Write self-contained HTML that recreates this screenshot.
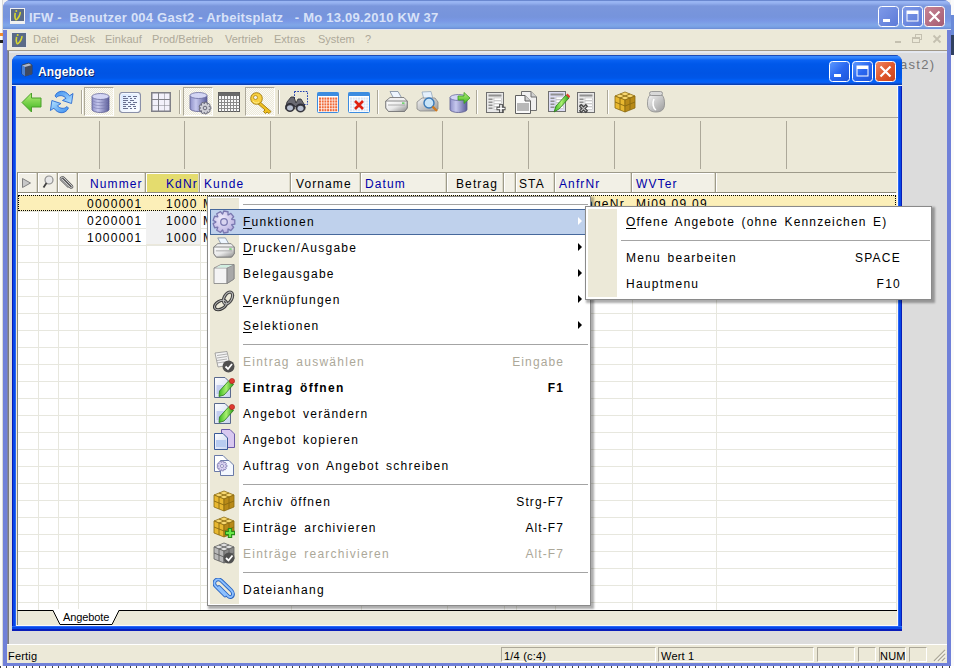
<!DOCTYPE html><html><head><meta charset="utf-8"><style>
*{box-sizing:border-box;margin:0;padding:0}
html,body{width:954px;height:668px;overflow:hidden;background:#f2f2f2;font-family:"Liberation Sans",sans-serif;position:relative}
.a{position:absolute}
.t{position:absolute;white-space:pre;font:12px "Liberation Sans",sans-serif;letter-spacing:1.25px;word-spacing:2px;color:#000}
#ow{left:3px;top:0;width:948px;height:666px;background:#7080d8;border-radius:8px 8px 0 0;}
#otb{left:3px;top:0;width:948px;height:30px;border-radius:8px 8px 0 0;
 background:linear-gradient(#6a88d0 0px,#6a88d0 1px,#9ab6f4 1px,#96b2f0 3px,#7a96dc 6px,#7694dc 17px,#7a98e6 21px,#80a6e8 25px,#78a0e4 27px,#6c8cd4 29px,#e4e6f0 29px,#e4e6f0 30px);}
#ottl{left:29px;top:10px;font:bold 13px "Liberation Sans",sans-serif;color:#d8e2f8;letter-spacing:0.23px;white-space:pre}
#omenu{left:7px;top:30px;width:940px;height:20px;background:#ece9d8;}
#omenu span{position:absolute;top:3px;font:11px "Liberation Sans",sans-serif;color:#aca899}
#mdi{left:7px;top:50px;width:940px;height:594px;background:#dcdcdc;border-top:1px solid #a09888;border-left:1px solid #7c80a8;box-shadow:inset 0 2px 0 #e4e8f0}
#iw{left:12px;top:55px;width:890px;height:576px;border-radius:7px 7px 0 0;background:linear-gradient(to bottom, transparent 0 571px, #2a66f8 571px 572px, #0848e6 572px 574px, #0a1cb8 574px 576px), linear-gradient(to right, #0a1cb8 0 1px, #0848e6 1px 3px, #2a66f8 3px 4px, transparent 4px 886px, #2a66f8 886px 887px, #0848e6 887px 889px, #0a1cb8 889px 890px), #0831d9;}
#itb{left:12px;top:55px;width:890px;height:31px;border-radius:7px 7px 0 0;
 background:linear-gradient(#1a4ab8 0px,#1a4ab8 1px,#3a8cff 1px,#2f80fb 3px,#0a62f2 5px,#0058ea 9px,#0054e4 18px,#0056e8 23px,#0062fa 26px,#0a5cf0 28px,#0a44b8 29px,#0a3cac 30px,#e8eefc 30px,#e8eefc 31px);}
#ittl{left:38px;top:65px;font:bold 12px "Liberation Sans",sans-serif;color:#fff;text-shadow:1px 1px 0 #0a246a;letter-spacing:0.15px}
#icont{left:16px;top:86px;width:882px;height:540px;background:#ece9d8;border-bottom:1px solid #fafaf8;border-right:1px solid #fafaf8}
#tbar{left:16px;top:86px;width:882px;height:32px;border-bottom:1px solid #aca899;}
.sep{position:absolute;top:90px;width:2px;height:24px;border-left:1px solid #aca899;border-right:1px solid #fff}
.pr{position:absolute;top:87px;width:30px;height:29px;border:1px solid;border-color:#aca899 #fff #fff #aca899;
 background-color:#f4f3ee;background-image:repeating-conic-gradient(#ece9d8 0 25%, #fbfaf6 0 50%);background-size:2px 2px}
.fsep{position:absolute;top:121px;width:1px;height:48px;background:#aca899}
#hdr{left:17px;top:172px;width:879px;height:21px;background:#ece9d8;border-top:1px solid #9d9a8a;border-bottom:1px solid #8d8a7a;border-left:1px solid #8d8a7a}
.hc{position:absolute;top:173px;height:19px;background:#f2f0e6;border-left:1px solid #fff;border-right:1px solid #9d9a8a;box-shadow:inset -1px 0 0 #dcd9c8, inset 0 1px 0 #fff}
.ht{position:absolute;top:177px;white-space:pre;font:12px "Liberation Sans",sans-serif;letter-spacing:1.1px;color:#0000a8}
#gbody{left:17px;top:193px;width:880px;height:417px;background-color:#fff;
 background-image:repeating-linear-gradient(to bottom, transparent 0 16px, #e7e7de 16px 17px);background-position:0 2px}
.vl{position:absolute;top:193px;width:1px;height:417px;background:#e7e7de}
#tabs{left:17px;top:610px;width:880px;height:15px;background:#ece9d8;border-top:1px solid #000;border-left:1px solid #8a8878}
#status{left:7px;top:644px;width:940px;height:19px;background:#ece9d8;border-top:1px solid #fff}
.sp{position:absolute;top:647px;height:15px;border:1px solid;border-color:#aca899 #fff #fff #aca899}
.stt{position:absolute;top:650px;letter-spacing:0.2px;font:11px "Liberation Sans",sans-serif;white-space:pre;color:#000}
#menu{left:207px;top:196px;width:384px;height:410px;background:#fff;border:1px solid #8a8a8a;box-shadow:2px 2px 2px 1px rgba(0,0,0,0.32)}
#mcol{left:210px;top:198px;width:29px;height:406px;background:#ece9d8}
#sub{left:585px;top:206px;width:347px;height:94px;background:#fff;border:1px solid #8a8a8a;box-shadow:2px 2px 2px 1px rgba(0,0,0,0.32)}
#scol{left:588px;top:209px;width:29px;height:88px;background:#ece9d8}
.msep{position:absolute;height:2px;border-top:1px solid #a4a4a4;border-bottom:1px solid #fff}
.dis{color:#aca899}
u{text-decoration:none;border-bottom:1px solid currentColor;display:inline-block;line-height:11px}
</style></head><body>
<div class="a" id="ow"></div><div class="a" id="otb"></div>
<div class="a" id="ottl">IFW -  Benutzer 004 Gast2 - Arbeitsplatz   - Mo 13.09.2010 KW 37</div>
<div class="a" id="omenu">
<span style="left:26px">Datei</span>
<span style="left:63px">Desk</span>
<span style="left:98px">Einkauf</span>
<span style="left:145px">Prod/Betrieb</span>
<span style="left:218px">Vertrieb</span>
<span style="left:267px">Extras</span>
<span style="left:311px">System</span>
<span style="left:358px">?</span>
</div>
<div class="a" id="mdi"></div><div class="a" style="left:8px;top:51px;width:1px;height:593px;background:#7a7a7a"></div>
<div class="t" style="left:900px;top:57px;color:#767676;font-size:13px;letter-spacing:1.3px">ast2)</div>
<div class="a" id="iw"></div><div class="a" id="itb"></div><div class="a" id="ittl">Angebote</div>
<div class="a" id="icont"></div><div class="a" id="tbar"></div>
<div class="sep" style="left:81px"></div>
<div class="sep" style="left:179px"></div>
<div class="sep" style="left:278px"></div>
<div class="sep" style="left:377px"></div>
<div class="sep" style="left:476px"></div>
<div class="sep" style="left:607px"></div>
<div class="pr" style="left:84px"></div>
<div class="pr" style="left:183px"></div>
<div class="pr" style="left:245px"></div>
<div class="fsep" style="left:99px"></div>
<div class="fsep" style="left:184px"></div>
<div class="fsep" style="left:270px"></div>
<div class="fsep" style="left:356px"></div>
<div class="fsep" style="left:442px"></div>
<div class="fsep" style="left:528px"></div>
<div class="fsep" style="left:614px"></div>
<div class="fsep" style="left:700px"></div>
<div class="fsep" style="left:786px"></div>
<div class="a" id="hdr"></div>
<div class="hc" style="left:18px;width:20px;"></div>
<div class="hc" style="left:38px;width:20px;"></div>
<div class="hc" style="left:58px;width:20px;"></div>
<div class="hc" style="left:78px;width:68px;"></div>
<div class="hc" style="left:146px;width:54px;background:#e4dc6e;"></div>
<div class="hc" style="left:200px;width:91px;"></div>
<div class="hc" style="left:291px;width:70px;"></div>
<div class="hc" style="left:361px;width:86px;"></div>
<div class="hc" style="left:447px;width:57px;"></div>
<div class="hc" style="left:504px;width:12px;"></div>
<div class="hc" style="left:516px;width:39px;"></div>
<div class="hc" style="left:555px;width:77px;"></div>
<div class="hc" style="left:632px;width:84px;"></div>
<div class="hc" style="left:716px;width:181px;background:#ece9d8;border-right:none;box-shadow:none;"></div>
<div class="ht" style="left:90px;color:#0000a8">Nummer</div>
<div class="ht" style="left:166px;color:#0000a8">KdNr</div>
<div class="ht" style="left:204px;color:#0000a8">Kunde</div>
<div class="ht" style="left:296px;color:#000">Vorname</div>
<div class="ht" style="left:365px;color:#0000a8">Datum</div>
<div class="ht" style="left:456px;color:#000">Betrag</div>
<div class="ht" style="left:519px;color:#000">STA</div>
<div class="ht" style="left:559px;color:#0000a8">AnfrNr</div>
<div class="ht" style="left:636px;color:#0000a8">WVTer</div>
<svg class="a" style="left:21px;top:177px" width="11" height="12"><path d="M1.5 1.5 L9.5 6 L1.5 10.5 Z" fill="#c8c8c8" stroke="#808080" stroke-width="1"/></svg>
<svg class="a" style="left:42px;top:175px" width="12" height="14"><circle cx="7" cy="5" r="4" fill="#e8e8e8" stroke="#909090" stroke-width="1.2"/><path d="M4.5 8 L1.5 12.5" stroke="#404040" stroke-width="1.8"/></svg>
<svg class="a" style="left:59px;top:176px" width="15" height="14"><path d="M3 3 L11 11 C12 12.5 14 11.5 13 10 L5 2 C3.5 0.5 1 1.5 2 3.5 L9 10.5" fill="none" stroke="#606060" stroke-width="2.2" stroke-linecap="round"/><path d="M3 3 L11 11 C12 12.5 14 11.5 13 10 L5 2 C3.5 0.5 1 1.5 2 3.5 L9 10.5" fill="none" stroke="#e8e8e8" stroke-width="0.8" stroke-linecap="round"/></svg>
<div class="a" id="gbody"></div>
<div class="vl" style="left:38px"></div>
<div class="vl" style="left:58px"></div>
<div class="vl" style="left:78px"></div>
<div class="vl" style="left:146px"></div>
<div class="vl" style="left:200px"></div>
<div class="vl" style="left:291px"></div>
<div class="vl" style="left:361px"></div>
<div class="vl" style="left:447px"></div>
<div class="vl" style="left:504px"></div>
<div class="vl" style="left:516px"></div>
<div class="vl" style="left:555px"></div>
<div class="vl" style="left:632px"></div>
<div class="vl" style="left:716px"></div>
<div class="vl" style="left:896px"></div>
<div class="a" style="left:17px;top:193px;width:880px;height:18px;background:#fcefb8;border-top:2px solid #fff;"></div><div class="a" style="left:18px;top:195px;width:879px;height:16px;border:1px dotted #000;width:878px"></div>
<div class="a" style="left:146px;top:211px;width:54px;height:34px;background:#f1f1f1;border-bottom:1px solid #ebe8dc"></div>
<div class="a" style="left:17px;top:193px;width:1px;height:417px;background:#8d8a7a"></div>
<div class="t" style="left:87px;top:197px">0000001</div><div class="t" style="left:166px;top:197px">1000</div><div class="t" style="left:203px;top:197px">M</div>
<div class="t" style="left:87px;top:214px">0200001</div><div class="t" style="left:166px;top:214px">1000</div><div class="t" style="left:203px;top:214px">M</div>
<div class="t" style="left:87px;top:231px">1000001</div><div class="t" style="left:166px;top:231px">1000</div><div class="t" style="left:203px;top:231px">M</div>
<div class="t" style="left:559px;top:197px">AnfrageNr</div><div class="t" style="left:636px;top:197px">Mi09.09.09</div>
<div class="a" id="tabs"></div>
<svg class="a" style="left:50px;top:609px" width="72" height="17"><path d="M2.5 0 L10 15.5 H62 L69.5 0 Z" fill="#fff" stroke="none"/><path d="M3 1.5 L10 15.5 H62 L69 1.5" fill="none" stroke="#000" stroke-width="1"/></svg>
<div class="stt" style="left:63px;top:611px;letter-spacing:-0.1px">Angebote</div>
<div class="a" id="status"></div>
<div class="stt" style="left:8px">Fertig</div>
<div class="sp" style="left:501px;width:155px"></div>
<div class="sp" style="left:658px;width:156px"></div>
<div class="sp" style="left:817px;width:38px"></div>
<div class="sp" style="left:858px;width:18px"></div>
<div class="sp" style="left:879px;width:27px"></div>
<div class="sp" style="left:909px;width:18px"></div>
<div class="stt" style="left:504px">1/4 (c:4)</div><div class="stt" style="left:661px">Wert 1</div><div class="stt" style="left:880px">NUM</div>
<svg width="0" height="0" style="position:absolute"><defs>
<linearGradient id="gGreen" x1="0" y1="0" x2="0" y2="1"><stop offset="0" stop-color="#b8f07a"/><stop offset="1" stop-color="#3cb41e"/></linearGradient>
<linearGradient id="gBlue" x1="0" y1="0" x2="1" y2="1"><stop offset="0" stop-color="#9fd6ff"/><stop offset="1" stop-color="#2a86e8"/></linearGradient>
<linearGradient id="gDb" x1="0" y1="0" x2="1" y2="0"><stop offset="0" stop-color="#8e90c8"/><stop offset="0.35" stop-color="#c6c8ee"/><stop offset="1" stop-color="#5a5c98"/></linearGradient>
<linearGradient id="gGold" x1="0" y1="0" x2="1" y2="1"><stop offset="0" stop-color="#ffe27a"/><stop offset="0.5" stop-color="#e8b830"/><stop offset="1" stop-color="#b07c10"/></linearGradient>
<linearGradient id="gGray" x1="0" y1="0" x2="1" y2="1"><stop offset="0" stop-color="#f4f4f4"/><stop offset="1" stop-color="#9a9a9a"/></linearGradient>
<linearGradient id="gBtn" x1="0" y1="0" x2="1" y2="1"><stop offset="0" stop-color="#5f9bff"/><stop offset="0.5" stop-color="#2a67f0"/><stop offset="1" stop-color="#1f55d8"/></linearGradient>
<linearGradient id="gBtnI" x1="0" y1="0" x2="1" y2="1"><stop offset="0" stop-color="#7f9ae8"/><stop offset="1" stop-color="#5c7ad8"/></linearGradient>
<linearGradient id="gClose" x1="0" y1="0" x2="1" y2="1"><stop offset="0" stop-color="#f08a6a"/><stop offset="0.5" stop-color="#e0582c"/><stop offset="1" stop-color="#c8401a"/></linearGradient>
<linearGradient id="gCloseI" x1="0" y1="0" x2="1" y2="1"><stop offset="0" stop-color="#c88494"/><stop offset="1" stop-color="#a45c72"/></linearGradient>
<linearGradient id="gPr" x1="0" y1="0" x2="1" y2="1"><stop offset="0" stop-color="#ffffff"/><stop offset="0.5" stop-color="#e8e8e8"/><stop offset="1" stop-color="#8a8a8a"/></linearGradient>
<linearGradient id="gRef" x1="0" y1="0" x2="1" y2="1"><stop offset="0" stop-color="#3a8ef0"/><stop offset="1" stop-color="#b8e4ff"/></linearGradient><linearGradient id="gRef2" x1="1" y1="1" x2="0" y2="0"><stop offset="0" stop-color="#3a8ef0"/><stop offset="1" stop-color="#b8e4ff"/></linearGradient>
<linearGradient id="gDocL" x1="0" y1="0" x2="1" y2="1"><stop offset="0" stop-color="#d8e8ff"/><stop offset="1" stop-color="#ffffff"/></linearGradient>
<linearGradient id="gDoc" x1="0" y1="0" x2="1" y2="1"><stop offset="0" stop-color="#ffffff"/><stop offset="1" stop-color="#c8d4ee"/></linearGradient>
<linearGradient id="gPen" x1="0" y1="0" x2="1" y2="0"><stop offset="0" stop-color="#38b820"/><stop offset="0.5" stop-color="#a8f070"/><stop offset="1" stop-color="#2a9a18"/></linearGradient>
</defs></svg>
<svg class="a" style="left:10px;top:8px" width="15" height="16" viewBox="0 0 15 16"><rect x="0" y="0" width="15" height="16" fill="#f0f0f0"/><rect x="1" y="1" width="13" height="12" fill="#5a6a88"/><path d="M5.2 4.8 C4.5 8.8 5.2 12.8 6.8 11.5 C9.0 9.6 10.5 5.6 10.2 4.0" fill="none" stroke="#d8d830" stroke-width="1.6"/><circle cx="6.3" cy="2.9" r="1" fill="#d8d830"/></svg>
<svg class="a" style="left:11px;top:32px" width="16" height="16" viewBox="0 0 16 16"><rect x="0" y="0" width="16" height="16" fill="#e8e8e8"/><rect x="1" y="1" width="14" height="14" fill="#5a6a88"/><path d="M5.6 4.8 C4.8 8.8 5.6 12.8 7.2 11.5 C9.6 9.6 11.2 5.6 10.9 4.0" fill="none" stroke="#d8d830" stroke-width="1.6"/><circle cx="6.7" cy="2.9" r="1" fill="#d8d830"/></svg>
<svg class="a" style="left:878px;top:6px" width="21" height="21" viewBox="0 0 21 21"><rect x="0.5" y="0.5" width="20" height="20" rx="3" fill="url(#gBtnI)" stroke="#fff" stroke-width="1"/><rect x="5" y="13" width="7" height="3" fill="#fff"/></svg>
<svg class="a" style="left:902px;top:6px" width="21" height="21" viewBox="0 0 21 21"><rect x="0.5" y="0.5" width="20" height="20" rx="3" fill="url(#gBtnI)" stroke="#fff" stroke-width="1"/><rect x="5" y="5" width="11" height="10" fill="none" stroke="#fff" stroke-width="1"/><rect x="5" y="5" width="11" height="3" fill="#fff"/></svg>
<svg class="a" style="left:924px;top:6px" width="21" height="21" viewBox="0 0 21 21"><rect x="0.5" y="0.5" width="20" height="20" rx="3" fill="url(#gCloseI)" stroke="#fff" stroke-width="1"/><path d="M5.5 5.5 L15.5 15.5 M15.5 5.5 L5.5 15.5" stroke="#fff" stroke-width="2.2"/></svg>
<svg class="a" style="left:19px;top:62px" width="16" height="16" viewBox="0 0 16 16"><path d="M3 3 L10 1 L13 3 V12 L6 14 L3 12 Z" fill="#b0b8c8" stroke="#303848" stroke-width="0.8"/><path d="M6 5 L13 3 V12 L6 14 Z" fill="#404a60"/><path d="M3 3 L6 5 V14 L3 12 Z" fill="#4a80d0"/></svg>
<svg class="a" style="left:829px;top:61px" width="21" height="21" viewBox="0 0 21 21"><rect x="0.5" y="0.5" width="20" height="20" rx="3" fill="url(#gBtn)" stroke="#fff" stroke-width="1"/><rect x="5" y="13" width="7" height="3" fill="#fff"/></svg>
<svg class="a" style="left:852px;top:61px" width="21" height="21" viewBox="0 0 21 21"><rect x="0.5" y="0.5" width="20" height="20" rx="3" fill="url(#gBtn)" stroke="#fff" stroke-width="1"/><rect x="5" y="5" width="11" height="10" fill="none" stroke="#fff" stroke-width="1"/><rect x="5" y="5" width="11" height="3" fill="#fff"/></svg>
<svg class="a" style="left:875px;top:61px" width="21" height="21" viewBox="0 0 21 21"><rect x="0.5" y="0.5" width="20" height="20" rx="3" fill="url(#gClose)" stroke="#fff" stroke-width="1"/><path d="M5.5 5.5 L15.5 15.5 M15.5 5.5 L5.5 15.5" stroke="#fff" stroke-width="2.2"/></svg>
<svg class="a" style="left:21px;top:92px" width="21" height="21" viewBox="0 0 21 21"><path d="M1 10.5 L10.5 1 V6 H20 V15 H10.5 V20 Z" fill="url(#gGreen)" stroke="#4aa02a" stroke-width="1"/></svg>
<svg class="a" style="left:44px;top:86px" width="36" height="32" viewBox="0 0 36 32"><path d="M11 10 C13 4.5 21 3 25.5 9.8 L29 7.5 L27.5 17.5 L18.5 14.5 L22 12.2 C20 9.5 15 8.5 12.4 11.5 Z" fill="url(#gRef)" stroke="#2a6ad0" stroke-width="0.9" stroke-linejoin="round"/><path d="M24.4 22 C22.4 27.5 14.4 29 9.9 22.2 L6.4 24.5 L7.9 14.5 L16.9 17.5 L13.4 19.8 C15.4 22.5 20.4 23.5 23 20.5 Z" fill="url(#gRef2)" stroke="#2a6ad0" stroke-width="0.9" stroke-linejoin="round"/></svg>
<svg class="a" style="left:91px;top:93px" width="19" height="20" viewBox="0 0 19 20"><path d="M1 3.5 V16.5 A8.5 3 0 0 0 18 16.5 V3.5 Z" fill="url(#gDb)" stroke="#5a5a90" stroke-width="0.8"/><ellipse cx="9.5" cy="3.5" rx="8.5" ry="3" fill="#d4d6f4" stroke="#6a6ca0" stroke-width="0.8"/><path d="M2 8 A8 2.5 0 0 0 17 8" fill="none" stroke="#7a7cb0" stroke-width="0.6"/><path d="M2 11 A8 2.5 0 0 0 17 11" fill="none" stroke="#7a7cb0" stroke-width="0.6"/><path d="M2 14 A8 2.5 0 0 0 17 14" fill="none" stroke="#7a7cb0" stroke-width="0.6"/></svg>
<svg class="a" style="left:119px;top:92px" width="22" height="21" viewBox="0 0 22 21"><rect x="0.5" y="0.5" width="21" height="20" rx="3" fill="#f4f8ff" stroke="#8a90a8" stroke-width="1.2"/><rect x="2" y="2" width="18" height="17" rx="1.5" fill="url(#gDocL)"/><rect x="4" y="4" width="3" height="1" fill="#6a7090"/><rect x="9" y="4" width="3" height="1" fill="#6a7090"/><rect x="14" y="4" width="4" height="1" fill="#6a7090"/><rect x="4" y="6" width="5" height="1" fill="#6a7090"/><rect x="11" y="6" width="2" height="1" fill="#6a7090"/><rect x="15" y="6" width="2" height="1" fill="#6a7090"/><rect x="4" y="8" width="5" height="1" fill="#6a7090"/><rect x="11" y="8" width="4" height="1" fill="#6a7090"/><rect x="4" y="10" width="3" height="1" fill="#6a7090"/><rect x="9" y="10" width="3" height="1" fill="#6a7090"/><rect x="14" y="10" width="4" height="1" fill="#6a7090"/><rect x="4" y="12" width="5" height="1" fill="#6a7090"/><rect x="11" y="12" width="5" height="1" fill="#6a7090"/><rect x="4" y="14" width="3" height="1" fill="#6a7090"/><rect x="9" y="14" width="3" height="1" fill="#6a7090"/><rect x="14" y="14" width="3" height="1" fill="#6a7090"/><rect x="4" y="16" width="5" height="1" fill="#6a7090"/><rect x="11" y="16" width="2" height="1" fill="#6a7090"/><rect x="15" y="16" width="2" height="1" fill="#6a7090"/></svg>
<svg class="a" style="left:151px;top:92px" width="20" height="20" viewBox="0 0 20 20"><rect x="0" y="0" width="20" height="20" fill="#808088"/><rect x="1.5" y="1.5" width="5.5" height="5.5" fill="#f2f0fb"/><rect x="1.5" y="8" width="5.5" height="5.5" fill="#f2f0fb"/><rect x="1.5" y="14" width="5.5" height="4.5" fill="#f2f0fb"/><rect x="8" y="1.5" width="5.5" height="5.5" fill="#f2f0fb"/><rect x="8" y="8" width="5.5" height="5.5" fill="#f2f0fb"/><rect x="8" y="14" width="5.5" height="4.5" fill="#f2f0fb"/><rect x="14" y="1.5" width="4.5" height="5.5" fill="#f2f0fb"/><rect x="14" y="8" width="4.5" height="5.5" fill="#f2f0fb"/><rect x="14" y="14" width="4.5" height="4.5" fill="#f2f0fb"/></svg>
<svg class="a" style="left:189px;top:92px" width="23" height="23" viewBox="0 0 23 23"><path d="M1 3.5 V16.5 A8.5 3 0 0 0 18 16.5 V3.5 Z" fill="url(#gDb)" stroke="#5a5a90" stroke-width="0.8"/><ellipse cx="9.5" cy="3.5" rx="8.5" ry="3" fill="#d4d6f4" stroke="#6a6ca0" stroke-width="0.8"/><path d="M20.08 14.57 L21.88 14.81 L21.88 17.19 L20.08 17.43 L20.04 17.52 L21.27 18.87 L19.74 20.69 L18.20 19.72 L18.12 19.77 L18.19 21.58 L15.85 22.00 L15.30 20.26 L15.20 20.25 L14.09 21.69 L12.03 20.50 L12.72 18.81 L12.66 18.74 L10.88 19.13 L10.07 16.89 L11.68 16.05 L11.68 15.95 L10.07 15.11 L10.88 12.87 L12.66 13.26 L12.72 13.19 L12.03 11.50 L14.09 10.31 L15.20 11.75 L15.30 11.74 L15.85 10.00 L18.19 10.42 L18.12 12.23 L18.20 12.28 L19.74 11.31 L21.27 13.13 L20.04 14.48Z" fill="#d0d0d8" stroke="#606070" stroke-width="0.9" stroke-linejoin="round"/><circle cx="16" cy="16" r="1.80" fill="none" stroke="#606070" stroke-width="0.9"/></svg>
<svg class="a" style="left:218px;top:92px" width="22" height="21" viewBox="0 0 22 21"><rect x="0.5" y="0.5" width="21" height="19" fill="#fafafa" stroke="#5a5a5a"/><rect x="0.5" y="0.5" width="21" height="3.5" fill="#6a6a6a"/><path d="M3.5 4 V19.5" stroke="#8a8a8a" stroke-width="1"/><path d="M6.5 4 V19.5" stroke="#8a8a8a" stroke-width="1"/><path d="M9.5 4 V19.5" stroke="#8a8a8a" stroke-width="1"/><path d="M12.5 4 V19.5" stroke="#8a8a8a" stroke-width="1"/><path d="M15.5 4 V19.5" stroke="#8a8a8a" stroke-width="1"/><path d="M18.5 4 V19.5" stroke="#8a8a8a" stroke-width="1"/><path d="M0.5 7.5 H21.5" stroke="#8a8a8a" stroke-width="1"/><path d="M0.5 10.5 H21.5" stroke="#8a8a8a" stroke-width="1"/><path d="M0.5 13.5 H21.5" stroke="#8a8a8a" stroke-width="1"/><path d="M0.5 16.5 H21.5" stroke="#8a8a8a" stroke-width="1"/></svg>
<svg class="a" style="left:250px;top:92px" width="22" height="22" viewBox="0 0 22 22"><path d="M9 9 L21 19.5 L19 21.5 L17 20 L15.5 21.5 L13.5 19.5 L15 18 L7 11 Z" fill="#f0c020" stroke="#a07808" stroke-width="0.9" stroke-linejoin="round"/><circle cx="6.5" cy="6.5" r="5.8" fill="#f8d040" stroke="#a07808" stroke-width="0.9"/><circle cx="5.5" cy="5.5" r="2" fill="#f4f1e8" stroke="#a07808" stroke-width="0.7"/><path d="M3 9 A4 4 0 0 0 9 10" stroke="#fff4a0" stroke-width="0.8" fill="none"/></svg>
<svg class="a" style="left:285px;top:91px" width="24" height="22" viewBox="0 0 24 22"><rect x="9.5" y="0.5" width="13" height="13" fill="none" stroke="#1a3ab0" stroke-width="1" stroke-dasharray="1.6 1.2"/><path d="M2 11 L6 6 H9 L11 12 L13 8 H16 L19 13 L20 17 L12 17 L10 15 L1 15 Z" fill="#6a6a72" stroke="#2a2a30" stroke-width="0.8"/><ellipse cx="5" cy="16.5" rx="4.6" ry="4" fill="#3a3a42" stroke="#202028" stroke-width="0.8"/><ellipse cx="15.5" cy="17" rx="4.6" ry="4" fill="#3a3a42" stroke="#202028" stroke-width="0.8"/><ellipse cx="5" cy="16.8" rx="3" ry="2.6" fill="#b8c0d0"/><ellipse cx="15.5" cy="17.3" rx="3" ry="2.6" fill="#b8c0d0"/></svg>
<svg class="a" style="left:317px;top:92px" width="22" height="21" viewBox="0 0 22 21"><rect x="0.5" y="0.5" width="21" height="20" rx="1" fill="#fff" stroke="#3c8ce0"/><rect x="0.5" y="0.5" width="21" height="3.5" fill="#3c8ce0"/><rect x="2.0" y="5.5" width="2" height="2.2" fill="#f06a3a"/><rect x="2.0" y="8.4" width="2" height="2.2" fill="#f06a3a"/><rect x="2.0" y="11.3" width="2" height="2.2" fill="#f06a3a"/><rect x="2.0" y="14.2" width="2" height="2.2" fill="#f06a3a"/><rect x="2.0" y="17.1" width="2" height="2.2" fill="#f06a3a"/><rect x="4.7" y="5.5" width="2" height="2.2" fill="#f06a3a"/><rect x="4.7" y="8.4" width="2" height="2.2" fill="#f06a3a"/><rect x="4.7" y="11.3" width="2" height="2.2" fill="#f06a3a"/><rect x="4.7" y="14.2" width="2" height="2.2" fill="#f06a3a"/><rect x="4.7" y="17.1" width="2" height="2.2" fill="#f06a3a"/><rect x="7.4" y="5.5" width="2" height="2.2" fill="#f06a3a"/><rect x="7.4" y="8.4" width="2" height="2.2" fill="#f06a3a"/><rect x="7.4" y="11.3" width="2" height="2.2" fill="#f06a3a"/><rect x="7.4" y="14.2" width="2" height="2.2" fill="#f06a3a"/><rect x="7.4" y="17.1" width="2" height="2.2" fill="#f06a3a"/><rect x="10.1" y="5.5" width="2" height="2.2" fill="#f06a3a"/><rect x="10.1" y="8.4" width="2" height="2.2" fill="#f06a3a"/><rect x="10.1" y="11.3" width="2" height="2.2" fill="#f06a3a"/><rect x="10.1" y="14.2" width="2" height="2.2" fill="#f06a3a"/><rect x="10.1" y="17.1" width="2" height="2.2" fill="#f06a3a"/><rect x="12.8" y="5.5" width="2" height="2.2" fill="#f06a3a"/><rect x="12.8" y="8.4" width="2" height="2.2" fill="#f06a3a"/><rect x="12.8" y="11.3" width="2" height="2.2" fill="#f06a3a"/><rect x="12.8" y="14.2" width="2" height="2.2" fill="#f06a3a"/><rect x="12.8" y="17.1" width="2" height="2.2" fill="#f06a3a"/><rect x="15.5" y="5.5" width="2" height="2.2" fill="#f06a3a"/><rect x="15.5" y="8.4" width="2" height="2.2" fill="#f06a3a"/><rect x="15.5" y="11.3" width="2" height="2.2" fill="#f06a3a"/><rect x="15.5" y="14.2" width="2" height="2.2" fill="#f06a3a"/><rect x="15.5" y="17.1" width="2" height="2.2" fill="#f06a3a"/><rect x="18.2" y="5.5" width="2" height="2.2" fill="#f06a3a"/><rect x="18.2" y="8.4" width="2" height="2.2" fill="#f06a3a"/><rect x="18.2" y="11.3" width="2" height="2.2" fill="#f06a3a"/><rect x="18.2" y="14.2" width="2" height="2.2" fill="#f06a3a"/><rect x="18.2" y="17.1" width="2" height="2.2" fill="#f06a3a"/></svg>
<svg class="a" style="left:348px;top:92px" width="22" height="21" viewBox="0 0 22 21"><rect x="0.5" y="0.5" width="21" height="20" rx="1" fill="#fff" stroke="#3c8ce0"/><rect x="0.5" y="0.5" width="21" height="3.5" fill="#3c8ce0"/><rect x="2.0" y="5.5" width="2" height="2.2" fill="#d8e4f4"/><rect x="2.0" y="8.4" width="2" height="2.2" fill="#d8e4f4"/><rect x="2.0" y="11.3" width="2" height="2.2" fill="#d8e4f4"/><rect x="2.0" y="14.2" width="2" height="2.2" fill="#d8e4f4"/><rect x="2.0" y="17.1" width="2" height="2.2" fill="#d8e4f4"/><rect x="4.7" y="5.5" width="2" height="2.2" fill="#d8e4f4"/><rect x="4.7" y="8.4" width="2" height="2.2" fill="#d8e4f4"/><rect x="4.7" y="11.3" width="2" height="2.2" fill="#d8e4f4"/><rect x="4.7" y="14.2" width="2" height="2.2" fill="#d8e4f4"/><rect x="4.7" y="17.1" width="2" height="2.2" fill="#d8e4f4"/><rect x="7.4" y="5.5" width="2" height="2.2" fill="#d8e4f4"/><rect x="7.4" y="8.4" width="2" height="2.2" fill="#d8e4f4"/><rect x="7.4" y="11.3" width="2" height="2.2" fill="#d8e4f4"/><rect x="7.4" y="14.2" width="2" height="2.2" fill="#d8e4f4"/><rect x="7.4" y="17.1" width="2" height="2.2" fill="#d8e4f4"/><rect x="10.1" y="5.5" width="2" height="2.2" fill="#d8e4f4"/><rect x="10.1" y="8.4" width="2" height="2.2" fill="#d8e4f4"/><rect x="10.1" y="11.3" width="2" height="2.2" fill="#d8e4f4"/><rect x="10.1" y="14.2" width="2" height="2.2" fill="#d8e4f4"/><rect x="10.1" y="17.1" width="2" height="2.2" fill="#d8e4f4"/><rect x="12.8" y="5.5" width="2" height="2.2" fill="#d8e4f4"/><rect x="12.8" y="8.4" width="2" height="2.2" fill="#d8e4f4"/><rect x="12.8" y="11.3" width="2" height="2.2" fill="#d8e4f4"/><rect x="12.8" y="14.2" width="2" height="2.2" fill="#d8e4f4"/><rect x="12.8" y="17.1" width="2" height="2.2" fill="#d8e4f4"/><rect x="15.5" y="5.5" width="2" height="2.2" fill="#d8e4f4"/><rect x="15.5" y="8.4" width="2" height="2.2" fill="#d8e4f4"/><rect x="15.5" y="11.3" width="2" height="2.2" fill="#d8e4f4"/><rect x="15.5" y="14.2" width="2" height="2.2" fill="#d8e4f4"/><rect x="15.5" y="17.1" width="2" height="2.2" fill="#d8e4f4"/><rect x="18.2" y="5.5" width="2" height="2.2" fill="#d8e4f4"/><rect x="18.2" y="8.4" width="2" height="2.2" fill="#d8e4f4"/><rect x="18.2" y="11.3" width="2" height="2.2" fill="#d8e4f4"/><rect x="18.2" y="14.2" width="2" height="2.2" fill="#d8e4f4"/><rect x="18.2" y="17.1" width="2" height="2.2" fill="#d8e4f4"/><path d="M7 9 L15 17 M15 9 L7 17" stroke="#e02010" stroke-width="2.6"/></svg>
<svg class="a" style="left:385px;top:91px" width="23" height="21" viewBox="0 0 23 21"><path d="M5 0.5 L13 0.5 L17 7.5 L9 8 Z" fill="#eef6ff" stroke="#7a8aa0" stroke-width="0.8"/><path d="M0.8 10 L5 6.5 H19 L22.2 10 V17 L19.5 20.5 H3.5 L0.8 17 Z" fill="#f0f0f0" stroke="#7a7a7a" stroke-width="0.9"/><path d="M0.8 10 H22.2 V17 L19.5 20.5 H3.5 L0.8 17 Z" fill="url(#gPr)" stroke="#7a7a7a" stroke-width="0.9"/><path d="M3 14 H20" stroke="#9a9a9a" stroke-width="0.8"/><rect x="17" y="11.5" width="2.5" height="1.2" fill="#4c4"/></svg>
<svg class="a" style="left:416px;top:91px" width="23" height="21" viewBox="0 0 23 21"><path d="M6 1 L15 0.5 L17 8 L8 8.5 Z" fill="#e4f0fc" stroke="#8aa0b8" stroke-width="0.7"/><path d="M1 11 L6 7 H19 L22 11 V18 L19 20 H4 L1 18 Z" fill="url(#gGray)" stroke="#888" stroke-width="0.8"/><circle cx="13" cy="12" r="5" fill="#c8e4f8" stroke="#3a7ab8" stroke-width="1.4"/><path d="M16.5 15.5 L21 20" stroke="#d07a20" stroke-width="2.4"/></svg>
<svg class="a" style="left:449px;top:92px" width="22" height="21" viewBox="0 0 22 21"><path d="M1 5.5 V17.5 A8.5 3 0 0 0 18 17.5 V5.5 Z" fill="url(#gDb)" stroke="#5a5a90" stroke-width="0.8"/><ellipse cx="9.5" cy="5.5" rx="8.5" ry="3" fill="#d4d6f4" stroke="#6a6ca0" stroke-width="0.8"/><path d="M9 4 H15 V0.5 L21 6 L15 11.5 V8 H9 Z" fill="url(#gGreen)" stroke="#3a9a20" stroke-width="0.8"/></svg>
<svg class="a" style="left:486px;top:92px" width="22" height="22" viewBox="0 0 22 22"><rect x="0.5" y="0.5" width="17" height="20" fill="#e8e8e8" stroke="#707070"/><rect x="2.5" y="2.5" width="13" height="2" fill="#909090"/><rect x="2.5" y="6.5" width="4" height="1.5" fill="#909090"/><rect x="8" y="6.0" width="7.5" height="2.5" fill="#fff" stroke="#b0b0b0" stroke-width="0.5"/><rect x="2.5" y="9.5" width="4" height="1.5" fill="#909090"/><rect x="8" y="9.0" width="7.5" height="2.5" fill="#fff" stroke="#b0b0b0" stroke-width="0.5"/><rect x="2.5" y="12.5" width="4" height="1.5" fill="#909090"/><rect x="8" y="12.0" width="7.5" height="2.5" fill="#fff" stroke="#b0b0b0" stroke-width="0.5"/><rect x="2.5" y="15.5" width="4" height="1.5" fill="#909090"/><rect x="8" y="15.0" width="7.5" height="2.5" fill="#fff" stroke="#b0b0b0" stroke-width="0.5"/><path d="M15 12 V21 M10.5 16.5 H19.5" stroke="#404040" stroke-width="3.6"/><path d="M15 12.8 V20.2 M11.3 16.5 H18.7" stroke="#fff" stroke-width="1.6"/></svg>
<svg class="a" style="left:515px;top:91px" width="23" height="23" viewBox="0 0 23 23"><path d="M6.5 0.5 H16 L21.5 6 V19.5 H6.5 Z" fill="#f0f0f0" stroke="#707070"/><path d="M16 0.5 V6 H21.5" fill="#d0d0d0" stroke="#707070"/><path d="M0.5 4.5 H10 L15.5 10 V22.5 H0.5 Z" fill="#fafafa" stroke="#606060"/><path d="M10 4.5 V10 H15.5" fill="#d0d0d0" stroke="#606060"/><rect x="2" y="12" width="12" height="8" fill="#b8b8b8"/></svg>
<svg class="a" style="left:548px;top:91px" width="22" height="22" viewBox="0 0 22 22"><rect x="0.5" y="0.5" width="17" height="20" fill="#dcdcf4" stroke="#707070"/><rect x="2.5" y="2.5" width="13" height="2" fill="#909090"/><rect x="2.5" y="6.5" width="4" height="1.5" fill="#909090"/><rect x="8" y="6.0" width="7.5" height="2.5" fill="#fff" stroke="#b0b0b0" stroke-width="0.5"/><rect x="2.5" y="9.5" width="4" height="1.5" fill="#909090"/><rect x="8" y="9.0" width="7.5" height="2.5" fill="#fff" stroke="#b0b0b0" stroke-width="0.5"/><rect x="2.5" y="12.5" width="4" height="1.5" fill="#909090"/><rect x="8" y="12.0" width="7.5" height="2.5" fill="#fff" stroke="#b0b0b0" stroke-width="0.5"/><rect x="2.5" y="15.5" width="4" height="1.5" fill="#909090"/><rect x="8" y="15.0" width="7.5" height="2.5" fill="#fff" stroke="#b0b0b0" stroke-width="0.5"/><path d="M6 21 L8 15 L18 4 L21 7 L11 18 Z" fill="url(#gPen)" stroke="#2a7a18" stroke-width="0.8"/><path d="M18 4 L19.5 2.5 L22.5 5.5 L21 7 Z" fill="#e04030"/></svg>
<svg class="a" style="left:577px;top:92px" width="22" height="22" viewBox="0 0 22 22"><rect x="0.5" y="0.5" width="17" height="20" fill="#e8e8e8" stroke="#707070"/><rect x="2.5" y="2.5" width="13" height="2" fill="#909090"/><rect x="2.5" y="6.5" width="4" height="1.5" fill="#909090"/><rect x="8" y="6.0" width="7.5" height="2.5" fill="#fff" stroke="#b0b0b0" stroke-width="0.5"/><rect x="2.5" y="9.5" width="4" height="1.5" fill="#909090"/><rect x="8" y="9.0" width="7.5" height="2.5" fill="#fff" stroke="#b0b0b0" stroke-width="0.5"/><rect x="2.5" y="12.5" width="4" height="1.5" fill="#909090"/><rect x="8" y="12.0" width="7.5" height="2.5" fill="#fff" stroke="#b0b0b0" stroke-width="0.5"/><rect x="2.5" y="15.5" width="4" height="1.5" fill="#909090"/><rect x="8" y="15.0" width="7.5" height="2.5" fill="#fff" stroke="#b0b0b0" stroke-width="0.5"/><path d="M3 13 L10 20 M10 13 L3 20" stroke="#404040" stroke-width="3.2"/><path d="M3.8 13.8 L9.2 19.2 M9.2 13.8 L3.8 19.2" stroke="#c0c0c0" stroke-width="1.2"/></svg>
<svg class="a" style="left:614px;top:91px" width="23" height="23" viewBox="0 0 23 23"><path d="M11 1 L21 5 L11 9 L1 5 Z" fill="#f8d870" stroke="#8a6a10" stroke-width="0.8"/><path d="M1 5 L11 9 V21 L1 17 Z" fill="#e8b830" stroke="#8a6a10" stroke-width="0.8"/><path d="M21 5 L11 9 V21 L21 17 Z" fill="#b88a18" stroke="#8a6a10" stroke-width="0.8"/><path d="M6 3 L16 7 V19 M16 3 L6 7 V19 M1 11 L11 15 L21 11" fill="none" stroke="#8a6a10" stroke-width="0.9"/></svg>
<svg class="a" style="left:646px;top:91px" width="20" height="22" viewBox="0 0 20 22"><path d="M4 4 C2 6 1.5 9 1.5 13 C1.5 18 4 21 10 21 C16 21 18.5 18 18.5 13 C18.5 9 18 6 16 4 Z" fill="url(#gGray)" stroke="#8a8a8a" stroke-width="0.8"/><rect x="3.5" y="0.5" width="13" height="4" rx="2" fill="#d8d8d8" stroke="#8a8a8a" stroke-width="0.8"/><path d="M8 8 C6 12 7 17 10 19" stroke="#fff" stroke-width="1.5" fill="none"/></svg>
<div class="a" id="menu"></div><div class="a" id="mcol"></div>
<div class="msep" style="left:243px;top:204px;width:345px"></div>
<div class="a" style="left:210px;top:209px;width:377px;height:26px;background:#bfd1ec;border:1px solid #46689c"></div>
<div class="t " style="left:243px;top:215px"><u>F</u>unktionen</div>
<div class="a" style="left:578px;top:217px;width:0;height:0;border-left:4px solid #fff;border-top:4px solid transparent;border-bottom:4px solid transparent"></div>
<div class="t " style="left:243px;top:241px"><u>D</u>rucken/Ausgabe</div>
<div class="a" style="left:578px;top:243px;width:0;height:0;border-left:4px solid #000;border-top:4px solid transparent;border-bottom:4px solid transparent"></div>
<div class="t " style="left:243px;top:267px">Belegausgabe</div>
<div class="a" style="left:578px;top:269px;width:0;height:0;border-left:4px solid #000;border-top:4px solid transparent;border-bottom:4px solid transparent"></div>
<div class="t " style="left:243px;top:293px"><u>V</u>erknüpfungen</div>
<div class="a" style="left:578px;top:295px;width:0;height:0;border-left:4px solid #000;border-top:4px solid transparent;border-bottom:4px solid transparent"></div>
<div class="t " style="left:243px;top:319px"><u>S</u>elektionen</div>
<div class="a" style="left:578px;top:321px;width:0;height:0;border-left:4px solid #000;border-top:4px solid transparent;border-bottom:4px solid transparent"></div>
<div class="t dis" style="left:243px;top:355px">Eintrag auswählen</div>
<div class="t dis" style="right:390px;top:355px;letter-spacing:1.1px">Eingabe</div>
<div class="t " style="left:243px;top:381px"><b style="letter-spacing:1.3px">Eintrag öffnen</b></div>
<div class="t " style="right:390px;top:381px;letter-spacing:1.1px"><b>F1</b></div>
<div class="t " style="left:243px;top:407px">Angebot verändern</div>
<div class="t " style="left:243px;top:433px">Angebot kopieren</div>
<div class="t " style="left:243px;top:459px">Auftrag von Angebot schreiben</div>
<div class="t " style="left:243px;top:495px">Archiv öffnen</div>
<div class="t " style="right:390px;top:495px;letter-spacing:1.1px">Strg-F7</div>
<div class="t " style="left:243px;top:521px">Einträge archivieren</div>
<div class="t " style="right:390px;top:521px;letter-spacing:1.1px">Alt-F7</div>
<div class="t dis" style="left:243px;top:547px">Einträge rearchivieren</div>
<div class="t dis" style="right:390px;top:547px;letter-spacing:1.1px">Alt-F7</div>
<div class="t " style="left:243px;top:583px">Dateianhang</div>
<div class="msep" style="left:243px;top:344px;width:345px"></div>
<div class="msep" style="left:243px;top:484px;width:345px"></div>
<div class="msep" style="left:243px;top:572px;width:345px"></div>
<svg class="a" style="left:212px;top:210px" width="24" height="24" viewBox="0 0 24 24"><defs><radialGradient id="gGear" cx="0.4" cy="0.35" r="0.7"><stop offset="0" stop-color="#f0ecfc"/><stop offset="1" stop-color="#b8b0e0"/></radialGradient></defs><path d="M19.68 9.30 L22.78 9.82 L22.78 14.18 L19.68 14.70 L19.62 14.87 L21.66 17.26 L18.86 20.60 L16.15 19.00 L15.99 19.09 L16.02 22.24 L11.72 23.00 L10.68 20.03 L10.50 20.00 L8.50 22.43 L4.72 20.25 L5.82 17.30 L5.71 17.16 L2.61 17.74 L1.12 13.64 L3.86 12.09 L3.86 11.91 L1.12 10.36 L2.61 6.26 L5.71 6.84 L5.82 6.70 L4.72 3.75 L8.50 1.57 L10.50 4.00 L10.68 3.97 L11.72 1.00 L16.02 1.76 L15.99 4.91 L16.15 5.00 L18.86 3.40 L21.66 6.74 L19.62 9.13Z" fill="url(#gGear)" stroke="#7a78b0" stroke-width="1.3" stroke-linejoin="round"/><circle cx="12" cy="12" r="3.30" fill="#d8d4f0" stroke="#7a78b0" stroke-width="1.3"/></svg>
<svg class="a" style="left:213px;top:237px" width="22" height="21" viewBox="0 0 23 21"><path d="M5 0.5 L13 0.5 L17 7.5 L9 8 Z" fill="#eef6ff" stroke="#7a8aa0" stroke-width="0.8"/><path d="M0.8 10 L5 6.5 H19 L22.2 10 V17 L19.5 20.5 H3.5 L0.8 17 Z" fill="#f0f0f0" stroke="#7a7a7a" stroke-width="0.9"/><path d="M0.8 10 H22.2 V17 L19.5 20.5 H3.5 L0.8 17 Z" fill="url(#gPr)" stroke="#7a7a7a" stroke-width="0.9"/><path d="M3 14 H20" stroke="#9a9a9a" stroke-width="0.8"/><rect x="17" y="11.5" width="2.5" height="1.2" fill="#4c4"/></svg>
<svg class="a" style="left:213px;top:263px" width="22" height="22" viewBox="0 0 22 22"><path d="M1 5 L8 1.5 H21 V16 L14 20.5 H1 Z" fill="#f4f4f4" stroke="#808080" stroke-width="0.8"/><path d="M14 5 L21 1.5 V16 L14 20.5 Z" fill="#a8a8a8" stroke="#808080" stroke-width="0.8"/><path d="M1 5 H14 V20.5" fill="none" stroke="#909090" stroke-width="0.8"/><path d="M8 2 L19.5 2 L13.5 4.5 H3.5 Z" fill="#cfeee0"/></svg>
<svg class="a" style="left:213px;top:290px" width="23" height="23" viewBox="0 0 23 23"><ellipse cx="7.5" cy="15" rx="6.5" ry="4" transform="rotate(-30 7.5 15)" fill="none" stroke="#3a3a3a" stroke-width="3.2"/><ellipse cx="15" cy="8" rx="6.5" ry="3.8" transform="rotate(-60 15 8)" fill="none" stroke="#4a4a4a" stroke-width="3.2"/><ellipse cx="7.5" cy="15" rx="6.5" ry="4" transform="rotate(-30 7.5 15)" fill="none" stroke="#b8b8b8" stroke-width="0.9"/><ellipse cx="15" cy="8" rx="6.5" ry="3.8" transform="rotate(-60 15 8)" fill="none" stroke="#c8c8c8" stroke-width="0.9"/></svg>
<svg class="a" style="left:213px;top:351px" width="22" height="22" viewBox="0 0 22 22"><path d="M2 2 L14 0.5 L17 14 L5 16 Z" fill="#f4f4f4" stroke="#909090" stroke-width="0.8"/><path d="M4 4.5 L14 3" stroke="#a0a0a0" stroke-width="0.8"/><path d="M4 7.0 L14 5.5" stroke="#a0a0a0" stroke-width="0.8"/><path d="M4 9.5 L14 8" stroke="#a0a0a0" stroke-width="0.8"/><path d="M4 12.0 L14 10.5" stroke="#a0a0a0" stroke-width="0.8"/><circle cx="15.5" cy="15.5" r="6" fill="#505050"/><path d="M12.5 15.5 L15 18 L19 13" stroke="#fff" stroke-width="1.8" fill="none"/></svg>
<svg class="a" style="left:213px;top:376px" width="22" height="22" viewBox="0 0 22 22"><path d="M1.5 1.5 H12 L17.5 7 V21.5 H1.5 Z" fill="url(#gDoc)" stroke="#5a6a8e" stroke-width="1"/><rect x="3.5" y="9" width="11" height="9" fill="#c4cef0"/><path d="M6 20.5 L6.5 15 L16 4.5 L20.5 8.5 L11 19 Z" fill="url(#gPen)" stroke="#2a7a18" stroke-width="0.8" stroke-linejoin="round"/><circle cx="19" cy="5" r="2.6" fill="#e03a30" stroke="#a02018" stroke-width="0.6"/></svg>
<svg class="a" style="left:213px;top:402px" width="22" height="22" viewBox="0 0 22 22"><path d="M1.5 1.5 H12 L17.5 7 V21.5 H1.5 Z" fill="url(#gDoc)" stroke="#5a6a8e" stroke-width="1"/><rect x="3.5" y="9" width="11" height="9" fill="#c4cef0"/><path d="M6 20.5 L6.5 15 L16 4.5 L20.5 8.5 L11 19 Z" fill="url(#gPen)" stroke="#2a7a18" stroke-width="0.8" stroke-linejoin="round"/><circle cx="19" cy="5" r="2.6" fill="#e03a30" stroke="#a02018" stroke-width="0.6"/></svg>
<svg class="a" style="left:213px;top:428px" width="22" height="22" viewBox="0 0 22 22"><path d="M8.5 1.5 H17 L21.5 6 V19.5 H8.5 Z" fill="#d8c8f0" stroke="#6a5aa8"/><path d="M1.5 5.5 H10 L14.5 10 V21.5 H1.5 Z" fill="url(#gDoc)" stroke="#3a5a98"/><rect x="3" y="12" width="10" height="7" fill="#b8ccf0"/></svg>
<svg class="a" style="left:213px;top:454px" width="22" height="22" viewBox="0 0 22 22"><path d="M1.5 1.5 H10 L14.5 6 V17.5 H1.5 Z" fill="#fff" stroke="#6a7aa8"/><path d="M7.5 6.5 H16 L20.5 11 V21.5 H7.5 Z" fill="#f4f8ff" stroke="#6a7aa8"/><path d="M12.40 10.81 L13.90 11.01 L13.90 12.99 L12.40 13.19 L12.37 13.27 L13.39 14.39 L12.12 15.91 L10.83 15.10 L10.77 15.14 L10.83 16.65 L8.87 17.00 L8.41 15.55 L8.34 15.54 L7.41 16.74 L5.69 15.75 L6.27 14.34 L6.22 14.28 L4.73 14.61 L4.06 12.74 L5.40 12.04 L5.40 11.96 L4.06 11.26 L4.73 9.39 L6.22 9.72 L6.27 9.66 L5.69 8.25 L7.41 7.26 L8.34 8.46 L8.41 8.45 L8.87 7.00 L10.83 7.35 L10.77 8.86 L10.83 8.90 L12.12 8.09 L13.39 9.61 L12.37 10.73Z" fill="#d8d0f0" stroke="#8a88b8" stroke-width="0.9" stroke-linejoin="round"/><circle cx="9" cy="12" r="1.50" fill="#fff" stroke="#8a88b8" stroke-width="0.9"/></svg>
<svg class="a" style="left:213px;top:490px" width="23" height="23" viewBox="0 0 23 23"><path d="M11 1 L21 5 L11 9 L1 5 Z" fill="#f8d870" stroke="#8a6a10" stroke-width="0.8"/><path d="M1 5 L11 9 V21 L1 17 Z" fill="#e8b830" stroke="#8a6a10" stroke-width="0.8"/><path d="M21 5 L11 9 V21 L21 17 Z" fill="#b88a18" stroke="#8a6a10" stroke-width="0.8"/><path d="M6 3 L16 7 V19 M16 3 L6 7 V19 M1 11 L11 15 L21 11" fill="none" stroke="#8a6a10" stroke-width="0.9"/></svg>
<svg class="a" style="left:213px;top:516px" width="23" height="23" viewBox="0 0 23 23"><path d="M11 1 L21 5 L11 9 L1 5 Z" fill="#f8d870" stroke="#8a6a10" stroke-width="0.8"/><path d="M1 5 L11 9 V21 L1 17 Z" fill="#e8b830" stroke="#8a6a10" stroke-width="0.8"/><path d="M21 5 L11 9 V21 L21 17 Z" fill="#b88a18" stroke="#8a6a10" stroke-width="0.8"/><path d="M6 3 L16 7 V19 M16 3 L6 7 V19 M1 11 L11 15 L21 11" fill="none" stroke="#8a6a10" stroke-width="0.9"/><path d="M17 12 V22 M12 17 H22" stroke="#2a8a18" stroke-width="4.4"/><path d="M17 13 V21 M13 17 H21" stroke="#6ae84a" stroke-width="2.2"/></svg>
<svg class="a" style="left:213px;top:542px" width="23" height="23" viewBox="0 0 23 23"><path d="M11 1 L21 5 L11 9 L1 5 Z" fill="#e0e0e0" stroke="#606060" stroke-width="0.8"/><path d="M1 5 L11 9 V21 L1 17 Z" fill="#b8b8b8" stroke="#606060" stroke-width="0.8"/><path d="M21 5 L11 9 V21 L21 17 Z" fill="#888" stroke="#606060" stroke-width="0.8"/><path d="M6 3 L16 7 V19 M16 3 L6 7 V19 M1 11 L11 15 L21 11" fill="none" stroke="#606060" stroke-width="0.9"/><circle cx="16" cy="16" r="5.5" fill="#505050"/><path d="M13 16 L15.5 18.5 L19.5 13.5" stroke="#fff" stroke-width="1.8" fill="none"/></svg>
<svg class="a" style="left:213px;top:578px" width="22" height="22" viewBox="0 0 22 22"><path d="M6 9 L15 18 C17 20 20 19 20 16 C20 14 19 13 18 12 L8 2.5 C6.5 1 4 1 2.5 2.5 C1 4 1 6.5 2.5 8 L12 17.5" fill="none" stroke="#2a64c0" stroke-width="3.8" stroke-linecap="round"/><path d="M6 9 L15 18 C17 20 20 19 20 16 C20 14 19 13 18 12 L8 2.5 C6.5 1 4 1 2.5 2.5 C1 4 1 6.5 2.5 8 L12 17.5" fill="none" stroke="#8cc0ff" stroke-width="1.8" stroke-linecap="round"/></svg>
<div class="a" id="sub"></div><div class="a" id="scol"></div>
<div class="t" style="left:626px;top:215px;letter-spacing:1.15px"><u>O</u>ffene Angebote (ohne Kennzeichen E)</div>
<div class="msep" style="left:621px;top:240px;width:309px"></div>
<div class="t" style="left:626px;top:251px">Menu bearbeiten</div><div class="t" style="right:53px;top:251px">SPACE</div>
<div class="t" style="left:626px;top:277px">Hauptmenu</div><div class="t" style="right:53px;top:277px">F10</div>
<svg class="a" style="left:890px;top:31px" width="56" height="18"><rect x="5" y="10" width="6" height="2" fill="#c4c0b0"/><rect x="25.5" y="3.5" width="6" height="5" fill="none" stroke="#c4c0b0"/><rect x="22.5" y="6.5" width="7" height="5" fill="#ece9d8" stroke="#c4c0b0"/><rect x="22.5" y="6.5" width="7" height="1.5" fill="#c4c0b0"/><path d="M43.5 4.5 L50.5 11.5 M50.5 4.5 L43.5 11.5" stroke="#c4c0b0" stroke-width="1.8"/></svg>
<svg class="a" style="left:933px;top:649px" width="13" height="13"><path d="M12 1 L1 12 M12 5 L5 12 M12 9 L9 12" stroke="#aca899" stroke-width="1.2"/><path d="M12.8 1.8 L1.8 12.8 M12.8 5.8 L5.8 12.8 M12.8 9.8 L9.8 12.8" stroke="#fff" stroke-width="0.8"/></svg>
<div class="a" style="left:0;top:0;width:3px;height:668px;background:#fbfbfb;border-right:1px solid #d8d8d8"></div>
<div class="a" style="left:0;top:33px;width:3px;height:3px;background:#f08a30"></div><div class="a" style="left:0;top:40px;width:3px;height:3px;background:#202020"></div>
<div class="a" style="left:951px;top:0;width:3px;height:668px;background:#fafafa"></div><div class="a" style="left:951px;top:15px;width:3px;height:20px;background:#6a8ad8"></div><div class="a" style="left:951px;top:35px;width:3px;height:20px;background:#304060"></div>
<div class="a" style="left:0;top:666px;width:954px;height:2px;background:#fff;background-image:repeating-linear-gradient(to right,#444 0 1px,transparent 1px 6px,#444 6px 7px,transparent 7px 13px)"></div>
</body></html>
